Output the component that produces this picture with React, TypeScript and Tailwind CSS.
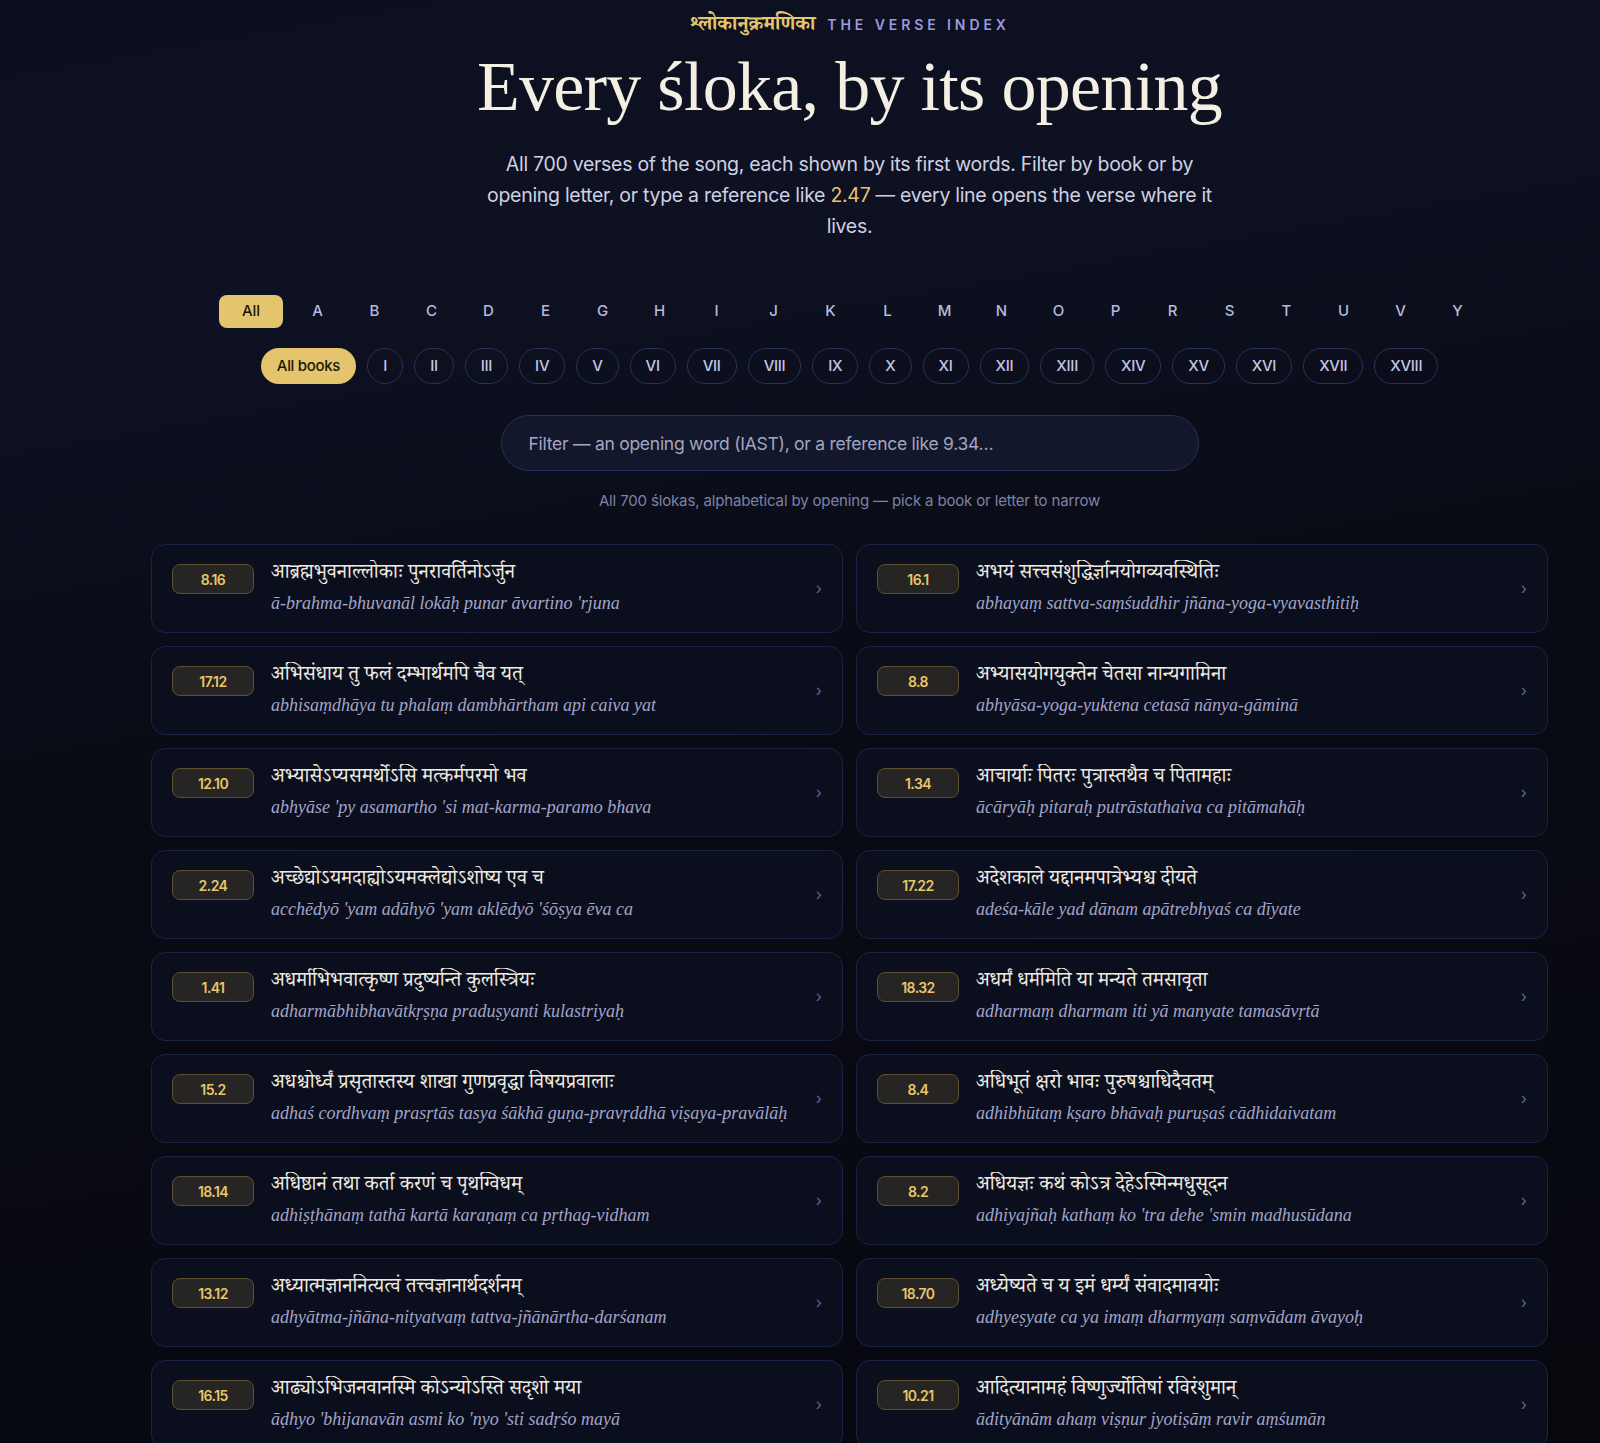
const letters = ['A', 'B', 'C', 'D', 'E', 'G', 'H', 'I', 'J', 'K', 'L', 'M', 'N', 'O', 'P', 'R', 'S', 'T', 'U', 'V', 'Y'];

const books = ['I', 'II', 'III', 'IV', 'V', 'VI', 'VII', 'VIII', 'IX', 'X', 'XI', 'XII', 'XIII', 'XIV', 'XV', 'XVI', 'XVII', 'XVIII'];

const verses = [
    { ref: '8.16', deva: 'आब्रह्मभुवनाल्लोकाः पुनरावर्तिनोऽर्जुन', iast: "ā-brahma-bhuvanāl lokāḥ punar āvartino 'rjuna" },
    { ref: '16.1', deva: 'अभयं सत्त्वसंशुद्धिर्ज्ञानयोगव्यवस्थितिः', iast: 'abhayaṃ sattva-saṃśuddhir jñāna-yoga-vyavasthitiḥ' },
    { ref: '17.12', deva: 'अभिसंधाय तु फलं दम्भार्थमपि चैव यत्', iast: 'abhisaṃdhāya tu phalaṃ dambhārtham api caiva yat' },
    { ref: '8.8', deva: 'अभ्यासयोगयुक्तेन चेतसा नान्यगामिना', iast: 'abhyāsa-yoga-yuktena cetasā nānya-gāminā' },
    { ref: '12.10', deva: 'अभ्यासेऽप्यसमर्थोऽसि मत्कर्मपरमो भव', iast: "abhyāse 'py asamartho 'si mat-karma-paramo bhava" },
    { ref: '1.34', deva: 'आचार्याः पितरः पुत्रास्तथैव च पितामहाः', iast: 'ācāryāḥ pitaraḥ putrāstathaiva ca pitāmahāḥ' },
    { ref: '2.24', deva: 'अच्छेद्योऽयमदाह्योऽयमक्लेद्योऽशोष्य एव च', iast: "acchēdyō 'yam adāhyō 'yam aklēdyō 'śōṣya ēva ca" },
    { ref: '17.22', deva: 'अदेशकाले यद्दानमपात्रेभ्यश्च दीयते', iast: 'adeśa-kāle yad dānam apātrebhyaś ca dīyate' },
    { ref: '1.41', deva: 'अधर्माभिभवात्कृष्ण प्रदुष्यन्ति कुलस्त्रियः', iast: 'adharmābhibhavātkṛṣṇa praduṣyanti kulastriyaḥ' },
    { ref: '18.32', deva: 'अधर्मं धर्ममिति या मन्यते तमसावृता', iast: 'adharmaṃ dharmam iti yā manyate tamasāvṛtā' },
    { ref: '15.2', deva: 'अधश्चोर्ध्वं प्रसृतास्तस्य शाखा गुणप्रवृद्धा विषयप्रवालाः', iast: 'adhaś cordhvaṃ prasṛtās tasya śākhā guṇa-pravṛddhā viṣaya-pravālāḥ' },
    { ref: '8.4', deva: 'अधिभूतं क्षरो भावः पुरुषश्चाधिदैवतम्', iast: 'adhibhūtaṃ kṣaro bhāvaḥ puruṣaś cādhidaivatam' },
    { ref: '18.14', deva: 'अधिष्ठानं तथा कर्ता करणं च पृथग्विधम्', iast: 'adhiṣṭhānaṃ tathā kartā karaṇaṃ ca pṛthag-vidham' },
    { ref: '8.2', deva: 'अधियज्ञः कथं कोऽत्र देहेऽस्मिन्मधुसूदन', iast: "adhiyajñaḥ kathaṃ ko 'tra dehe 'smin madhusūdana" },
    { ref: '13.12', deva: 'अध्यात्मज्ञाननित्यत्वं तत्त्वज्ञानार्थदर्शनम्', iast: 'adhyātma-jñāna-nityatvaṃ tattva-jñānārtha-darśanam' },
    { ref: '18.70', deva: 'अध्येष्यते च य इमं धर्म्यं संवादमावयोः', iast: 'adhyeṣyate ca ya imaṃ dharmyaṃ saṃvādam āvayoḥ' },
    { ref: '16.15', deva: 'आढ्योऽभिजनवानस्मि कोऽन्योऽस्ति सदृशो मया', iast: "āḍhyo 'bhijanavān asmi ko 'nyo 'sti sadṛśo mayā" },
    { ref: '10.21', deva: 'आदित्यानामहं विष्णुर्ज्योतिषां रविरंशुमान्', iast: 'ādityānām ahaṃ viṣṇur jyotiṣāṃ ravir aṃśumān' },
];

const deva = "font-['Noto_Serif_Devanagari','Noto_Sans_Devanagari','Lohit_Devanagari','Gargi',serif]";

function VerseCard({ v }: { v: (typeof verses)[number] }) {
    return (
        <a className="flex items-center h-[89px] px-5 rounded-[14px] border border-[#1b2344] bg-[#0b0e1c] hover:border-[#2c3866] transition-colors">
            <div className="flex flex-1 items-start gap-[17px] min-w-0">
                <span className="mt-1 flex h-[30px] w-[82px] shrink-0 items-center justify-center rounded-lg border border-[#5e5032] bg-[#262523] font-['Inter'] text-[14px] font-semibold tracking-[-0.04em] text-[#e8c66a]">
                    {v.ref}
                </span>
                <div className="min-w-0">
                    <div className={`${deva} text-[20px] leading-[30px] text-[#efebe1] truncate`}>{v.deva}</div>
                    <div className="font-['Liberation_Serif',serif] italic text-[18px] leading-[26px] text-[#a2a5c9] truncate">{v.iast}</div>
                </div>
            </div>
            <span className="ml-3 font-['Inter'] text-[16px] text-[#5c6898]">›</span>
        </a>
    );
}

export default function App() {
    return (
        <div className="min-h-screen bg-[#07080e] bg-[linear-gradient(170deg,#0c0f1e_0%,#0e1122_20%,#090b15_45%,#07080e_100%)] font-['Inter',sans-serif] text-[#cfd1e3]">
            <div className="pl-[99px]">
                <header className="mx-auto flex max-w-[760px] flex-col items-center pt-3 text-center">
                    <div className="flex items-center gap-3 h-[24px]">
                        <span className={`${deva} mt-[6px] text-[20px] font-bold text-[#e4c56d]`}>श्लोकानुक्रमणिका</span>
                        <span className="text-[14px] font-semibold uppercase tracking-[0.28em] text-[#9d9adf]">The verse index</span>
                    </div>
                    <h1 className="mt-[15px] font-['Liberation_Serif',serif] text-[70px] leading-[72px] tracking-[-0.01em] text-[#f3efe3]">
                        Every śloka, by its opening
                    </h1>
                    <p className="mt-[26px] max-w-[730px] text-[19.5px] leading-[31px] tracking-[-0.015em] text-[#cdd0e2]">
                        All 700 verses of the song, each shown by its first words. Filter by book or by opening letter, or type a reference like{' '}
                        <span className="text-[#e4c56d]">2.47</span> — every line opens the verse where it lives.
                    </p>
                </header>

                <nav className="mt-[53px] flex justify-center gap-3">
                    <button className="h-[33px] w-[64px] rounded-lg bg-[#e4c56d] text-[15px] font-medium text-[#1a1608]">All</button>
                    {letters.map((l) => (
                        <button key={l} className="h-[33px] w-[45px] rounded-lg text-[15px] font-medium text-[#b6badf]">
                            {l}
                        </button>
                    ))}
                </nav>

                <nav className="mt-[20px] flex justify-center gap-[11px]">
                    <button className="h-[36px] rounded-full bg-[#e4c56d] px-4 text-[15px] font-medium tracking-[-0.02em] text-[#1a1608]">All books</button>
                    {books.map((b) => (
                        <button key={b} className="h-[36px] min-w-[36px] rounded-full border border-[#28325a] px-[15px] text-[15px] font-medium tracking-[-0.02em] text-[#c3c6e4]">
                            {b}
                        </button>
                    ))}
                </nav>

                <div className="mt-[31px] flex justify-center">
                    <input
                        placeholder="Filter — an opening word (IAST), or a reference like 9.34…"
                        className="h-[56px] w-[698px] rounded-full border border-[#27305a] bg-[#12172b] px-[27px] text-[17.5px] tracking-[-0.015em] text-[#e6e7f2] placeholder:text-[#a3a6c2] outline-none"
                    />
                </div>

                <p className="mt-[19px] text-center text-[15px] tracking-[-0.01em] text-[#7d82a6]">
                    All 700 ślokas, alphabetical by opening — pick a book or letter to narrow
                </p>

                <div className="mx-auto mt-[31px] grid w-[1397px] grid-cols-2 gap-[13px]">
                    {verses.map((v) => (
                        <VerseCard key={v.ref} v={v} />
                    ))}
                </div>
            </div>
        </div>
    );
}
